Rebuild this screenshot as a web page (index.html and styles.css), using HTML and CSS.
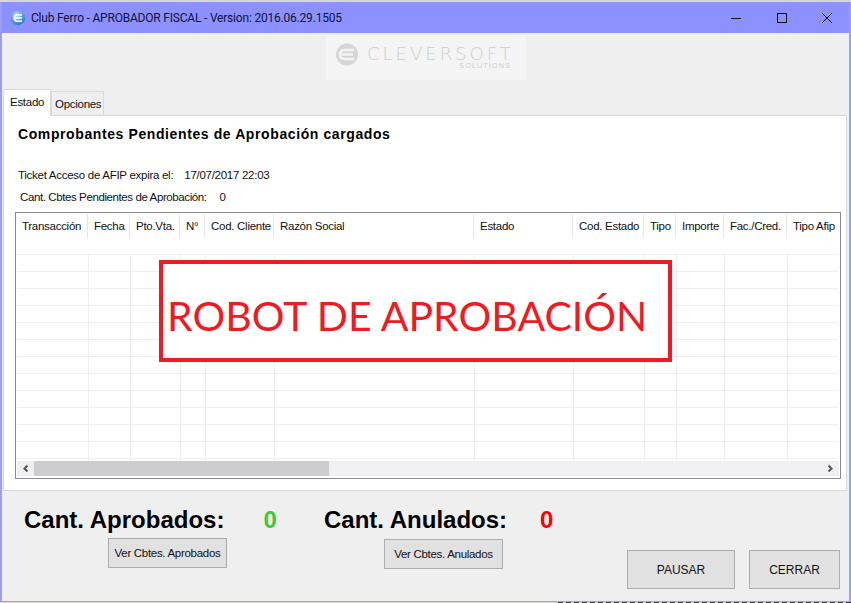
FILE: index.html
```html
<!DOCTYPE html>
<html lang="es">
<head>
    <meta charset="UTF-8">
    <title>Club Ferro - APROBADOR FISCAL</title>
    <link rel="stylesheet" href="styles.css">
</head>
<body>

<div class="window">
    <!-- Title bar -->
    <div class="titlebar">
        <svg class="app-icon" width="16" height="16" viewBox="0 0 16 16">
            <defs>
                <radialGradient id="globe" cx="0.4" cy="0.3" r="0.8">
                    <stop offset="0" stop-color="#bfe0f8"/>
                    <stop offset="0.6" stop-color="#4a98dc"/>
                    <stop offset="1" stop-color="#2f6fb4"/>
                </radialGradient>
            </defs>
            <circle cx="8" cy="8" r="7.2" fill="url(#globe)"/>
            <path d="M4.5 8h7.5M12 4.8H7Q4.4 4.8 4.4 8T7 11.2H12" fill="none" stroke="#fff" stroke-width="1.6"/>
        </svg>
        <span class="title-text">Club Ferro - APROBADOR FISCAL - Version: 2016.06.29.1505</span>
        <div class="win-buttons">
            <svg width="46" height="31" viewBox="0 0 46 31"><path d="M18 16.5h10" stroke="#111" fill="none"/></svg>
            <svg width="46" height="31" viewBox="0 0 46 31"><rect x="18.5" y="11.5" width="9" height="9" stroke="#111" fill="none"/></svg>
            <svg width="46" height="31" viewBox="0 0 46 31"><path d="M17 11l10 10M27 11l-10 10" stroke="#111" fill="none"/></svg>
        </div>
    </div>

    <!-- Logo strip -->
    <div class="logo-row">
        <div class="logo">
            <svg class="logo-mark" width="22" height="23" viewBox="0 0 22 23">
                <circle cx="11" cy="11.5" r="11" fill="#d6d6d6"/>
                <path d="M18 7H8Q4 7 4 11.5T8 16H18M5 11.5H17" fill="none" stroke="#f4f4f4" stroke-width="2.4"/>
            </svg>
            <div class="logo-text">
                <div class="logo-name">CLEVERSOFT</div>
                <div class="logo-sub">SOLUTIONS</div>
            </div>
        </div>
    </div>

    <!-- Tabs -->
    <div class="tabs">
        <div class="tab active">Estado</div>
        <div class="tab">Opciones</div>
    </div>

    <div class="panel">
        <h1 class="panel-title">Comprobantes Pendientes de Aprobación cargados</h1>
        <div class="info info-ticket"><span>Ticket Acceso de AFIP expira el:</span><span>17/07/2017 22:03</span></div>
        <div class="info info-count"><span>Cant. Cbtes Pendientes de Aprobación:</span><span>0</span></div>

        <div class="grid">
            <div class="cols head">
                <div>Transacción</div>
                <div>Fecha</div>
                <div>Pto.Vta.</div>
                <div>N°</div>
                <div>Cod. Cliente</div>
                <div>Razón Social</div>
                <div>Estado</div>
                <div>Cod. Estado</div>
                <div>Tipo</div>
                <div>Importe</div>
                <div>Fac./Cred.</div>
                <div>Tipo Afip</div>
            </div>
            <div class="cols rows">
                <div></div><div></div><div></div><div></div><div></div><div></div>
                <div></div><div></div><div></div><div></div><div></div><div></div>
            </div>
            <div class="scrollbar">
                <svg width="17" height="15" viewBox="0 1 17 15"><path d="M10.5 5.5L7.5 8.5l3 3" fill="none" stroke="#555" stroke-width="2"/></svg>
                <div class="track"><div class="thumb"></div></div>
                <svg width="17" height="15" viewBox="0 1 17 15"><path d="M6.5 5.5L9.5 8.5l-3 3" fill="none" stroke="#555" stroke-width="2"/></svg>
            </div>
        </div>

        <div class="stamp">ROBOT DE APROBACIÓN</div>
    </div>

    <!-- Totals and actions -->
    <div class="footer">
        <div class="total total-ok">
            <div class="total-line"><span class="total-label">Cant. Aprobados:</span><span class="total-num green">0</span></div>
            <button class="btn btn-small">Ver Cbtes. Aprobados</button>
        </div>
        <div class="total total-bad">
            <div class="total-line"><span class="total-label">Cant. Anulados:</span><span class="total-num red">0</span></div>
            <button class="btn btn-small">Ver Cbtes. Anulados</button>
        </div>
        <div class="actions">
            <button class="btn btn-pause">PAUSAR</button>
            <button class="btn btn-close">CERRAR</button>
        </div>
    </div>
</div>
<div class="desk-strip"></div>

</body>
</html>
```

FILE: styles.css
```css
html, body {
    margin: 0;
    padding: 0;
}
body {
    width: 851px;
    height: 603px;
    overflow: hidden;
    background: #d8d6d2;
    font-family: 'Liberation Sans', Arial, sans-serif;
    font-size: 11.5px;
    letter-spacing: -0.28px;
    color: #111;
}
.window {
    box-sizing: border-box;
    width: 851px;
    height: 600px;
    margin-top: 2px;
    border: 1px solid #9a9ef8;
    border-left-width: 2px;
    border-right-width: 2px;
    border-top: 0;
    background: #efefef;
    display: flex;
    flex-direction: column;
}
.desk-strip {
    height: 1px;
    margin-left: 558px;
    background: repeating-linear-gradient(to right, #3a3a4a 0, #3a3a4a 5px, #d8d6d2 5px, #d8d6d2 8px);
}
.titlebar {
    height: 31px;
    flex: none;
    background: #8c91ff;
    display: flex;
    align-items: center;
    padding-left: 8px;
}
.title-text {
    margin-left: 5px;
    font-family: Roboto, sans-serif;
    font-size: 12px;
    letter-spacing: -0.2px;
    color: #10123a;
}
.win-buttons {
    margin-left: auto;
    margin-right: -2px;
    display: flex;
}
.logo-row {
    height: 50px;
    flex: none;
    padding-left: 324px;
    padding-top: 3px;
    box-sizing: border-box;
}
.logo {
    width: 200px;
    height: 44px;
    background: #f4f4f4;
    display: flex;
    align-items: center;
    box-sizing: border-box;
    padding-left: 10px;
}
.logo-mark {
    margin-top: -7px;
}
.logo-text {
    margin-left: 9px;
    color: #cfcfcf;
    text-align: right;
}
.logo-name {
    font-family: 'DejaVu Sans', sans-serif;
    font-weight: 200;
    font-size: 18px;
    line-height: 16px;
    letter-spacing: 3px;
}
.logo-sub {
    margin-right: 3px;
    font-size: 7.5px;
    line-height: 8px;
    letter-spacing: 0.9px;
}
.tabs {
    height: 32px;
    flex: none;
    display: flex;
    align-items: flex-end;
    padding-left: 1px;
    box-sizing: border-box;
    position: relative;
    z-index: 1;
}
.tab {
    height: 24px;
    width: 53px;
    box-sizing: border-box;
    border: 1px solid #d9d9d9;
    border-bottom: 0;
    padding: 6px 0 0 3px;
}
.tab.active {
    height: 27px;
    width: 48px;
    background: #fff;
    padding: 6px 0 0 6px;
    margin-bottom: -1px;
}
.panel {
    height: 376px;
    flex: none;
    margin-left: 1px;
    margin-right: 2px;
    box-sizing: border-box;
    background: #fff;
    border: 1px solid #d9d9d9;
    position: relative;
}
.panel-title {
    margin: 0;
    padding: 10px 0 0 14px;
    font-size: 14px;
    line-height: 16px;
    letter-spacing: 0.6px;
    color: #000;
}
.info {
    display: flex;
    line-height: 14px;
}
.info-ticket {
    margin-top: 26px;
    padding-left: 14px;
    gap: 11px;
}
.info-count {
    margin-top: 8px;
    padding-left: 16px;
    gap: 13px;
    letter-spacing: -0.4px;
}
.grid {
    margin: 8px 0 0 11px;
    width: 826px;
    height: 267px;
    box-sizing: border-box;
    border: 1px solid #8a8a92;
    background: #fff;
    display: flex;
    flex-direction: column;
}
.cols {
    display: grid;
    grid-template-columns: 72px 42px 50px 25px 69px 200px 99px 71px 32px 48px 63px 1fr;
}
.head {
    height: 41px;
    flex: none;
}
.head div {
    margin-top: 1px;
    padding-left: 6px;
    border-right: 1px solid #e5e5e5;
    height: 24px;
    line-height: 24px;
    white-space: nowrap;
    overflow: hidden;
}
.head div:last-child {
    border-right: 0;
}
.rows {
    flex: 1;
    margin: 0 2px 0 1px;
    background: repeating-linear-gradient(to bottom, #efefef 0, #efefef 1px, #fff 1px, #fff 17px);
}
.rows div {
    border-right: 1px solid #efefef;
}
.rows div:last-child {
    border-right: 0;
}
.scrollbar {
    height: 15px;
    flex: none;
    margin: 1px 1px 2px 1px;
    background: #f0f0f0;
    display: flex;
}
.track {
    flex: 1;
}
.thumb {
    width: 295px;
    height: 15px;
    background: #cdcdcd;
}
.stamp {
    position: absolute;
    left: 155px;
    top: 144px;
    box-sizing: border-box;
    width: 513px;
    height: 102px;
    border: 4px solid #ed1c24;
    padding: 5px 0 0 4px;
    background: #fff;
    color: #ed1c24;
    font-family: Lato, sans-serif;
    font-size: 41px;
    line-height: 94px;
    letter-spacing: 0;
    white-space: nowrap;
}
.footer {
    flex: 1;
    display: flex;
    padding-left: 22px;
}
.total-line {
    display: flex;
    margin-top: 16px;
    height: 26px;
    line-height: 26px;
}
.total-label, .total-num {
    font-size: 24px;
    font-weight: bold;
    letter-spacing: 0;
}
.total-label {
    color: #000;
}
.total-num {
    margin-left: 39px;
}
.green { color: #3ccc32; }
.red { color: #ff0000; }
.total-ok {
    width: 300px;
}
.total-ok .btn-small {
    margin: 5px 0 0 84px;
}
.total-bad .btn-small {
    margin: 6px 0 0 60px;
}
.total-bad .total-num {
    margin-left: 33px;
}
.btn {
    display: block;
    box-sizing: border-box;
    background: #e1e1e1;
    border: 1px solid #adadad;
    font-family: 'Liberation Sans', Arial, sans-serif;
    font-size: 11.5px;
    letter-spacing: -0.3px;
    color: #111;
    padding: 0;
}
.btn-small {
    width: 119px;
    height: 30px;
}
.actions {
    margin-left: auto;
    margin-right: 9px;
    margin-top: 59px;
    display: flex;
    gap: 14px;
}
.btn-pause {
    width: 108px;
    height: 39px;
    font-size: 12px;
    letter-spacing: 0;
}
.btn-close {
    width: 91px;
    height: 39px;
    font-size: 12px;
    letter-spacing: 0;
}
```
